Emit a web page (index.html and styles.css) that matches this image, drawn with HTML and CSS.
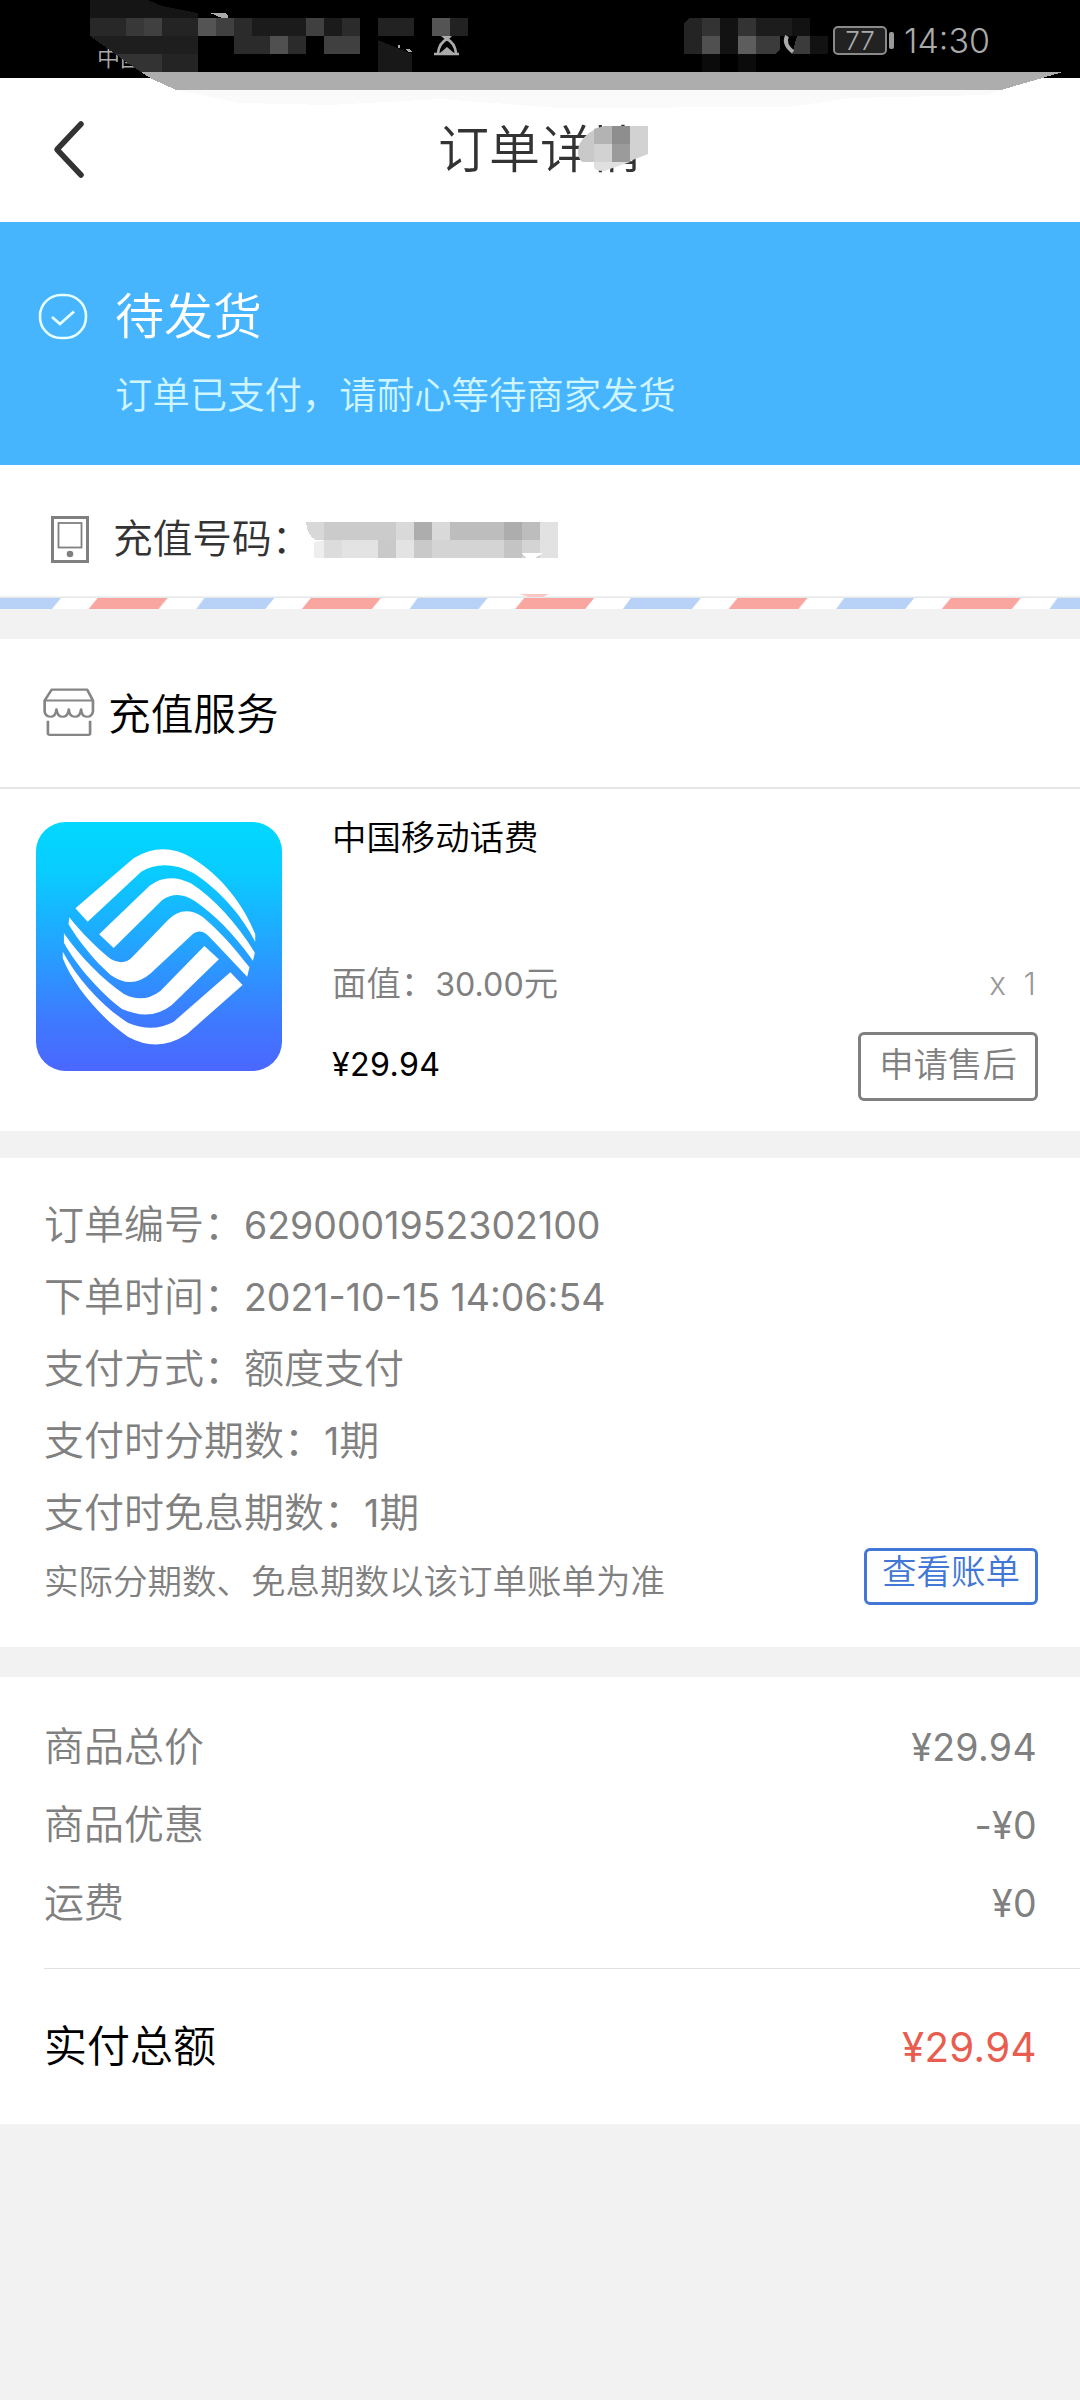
FILE: index.html
```html
<!DOCTYPE html>
<html lang="zh-CN">
<head>
<meta charset="utf-8">
<title>订单详情</title>
<link rel="stylesheet" href="styles.css">
</head>
<body>
<div class="page">
  <div class="status-bar">
    <span class="carrier">中国</span>
    <div class="status-right">
      <span class="battery">77</span><span class="battery-cap"></span><span class="clock">14:30</span>
    </div>
    <svg class="status-mask" width="1080" height="112" viewBox="0 0 1080 112" shape-rendering="crispEdges">
      <path fill="#151515" d="M90 0H148L162 6L198 13V72H141L90 36Z"/>
      <path fill="#282828" d="M90 18h36v18H90z"/>
      <path fill="#383838" d="M126 18h18v18h-18z"/>
      <path fill="#404040" d="M144 18h18v18h-18z"/>
      <path fill="#242424" d="M162 18h36v18h-36z"/>
      <path fill="#1e1e1e" d="M90 36h108v18h-83z"/>
      <path fill="#333" d="M115 54h47v18h-21z"/>
      <path fill="#242424" d="M162 54h36v18h-36z"/>
      <path fill="#545454" d="M198 18h18v18h-18zM432 18h18v18h-18z"/>
      <path fill="#404040" d="M216 18h18v18h-18zM306 18h18v18h-18zM324 36h36v18h-36z"/>
      <path fill="#2b2b2b" d="M234 18h18v18h-18zM342 18h18v18h-18zM234 36h36v18h-36zM288 36h18v18h-18z"/>
      <path fill="#1b1b1b" d="M252 18h54v18h-54zM324 18h18v18h-18z"/>
      <path fill="#505050" d="M270 36h18v18h-18z"/>
      <path fill="#222" d="M378 18h36v18h-36zM450 18h18v18h-18z"/>
      <path fill="#181818" d="M378 40l34 14v18h-34z"/>
      <path fill="#aaa" d="M210 13h15l3 3v2h-6zM398 45h2v3h-2zM405 49h4l3 3h-3z"/>
      <path fill="#242424" d="M684 24l5-6h13v36h-18z"/>
      <path fill="#333" d="M702 18h18v18h-18zM738 18h18v18h-18z"/>
      <path fill="#505050" d="M702 36h18v18h-18z"/>
      <path fill="#1c1c1c" d="M756 18h36v18h-36z"/>
      <path fill="#121212" d="M720 18h18v36h-18zM792 18h18v18h-18zM810 36h18v18h-18z"/>
      <path fill="#5d5d5d" d="M738 36h18v18h-18z"/>
      <path fill="#3b3b3b" d="M756 36h24v13l-4 5h-20zM797 36h13v18h-18z"/>
      <path fill="#0b0b0b" d="M702 54h18v18h-18zM738 54h18v18h-18z"/>
      <path fill="#fafafa" d="M176 90H1002L988 95L850 98L790 107L560 108L440 99L330 105L240 103Z"/>
      <path fill="#adadad" d="M141 72H1063L1001 90H176L152 79Z"/>
      <g shape-rendering="auto" fill="none" stroke="#aaa">
        <path stroke-width="4" d="M787 36c-3 6 1 12 6 16"/>
        <path stroke-width="2.6" d="M434 54h25M438 53c1-8 5-12 9-14 4 2 8 6 9 14"/>
        <path fill="#aaa" stroke="none" d="M441 36h11l-5 5zM440 53l7-6 7 6z"/>
      </g>
    </svg>
  </div>

  <header class="nav">
    <svg class="back" width="34" height="62" viewBox="0 0 34 62"><path d="M28 5L4 30.500L28 56" fill="none" stroke="#333" stroke-width="5.500" stroke-linecap="round" stroke-linejoin="round"/></svg>
    <h1 class="nav-title">订单详情
      <svg class="title-mask" width="72" height="48" viewBox="0 0 72 48">
        <path fill="#c9c9c9" d="M16 4C5 10 0 18 0 26C0 31 3 36 5 36H18V2Z"/>
        <path fill="#b3b3b3" d="M16 3L26 0H34V18H16Z"/>
        <path fill="#8e8e8e" d="M34 0H52V18H34Z"/>
        <path fill="#d2d2d2" d="M52 0H70V28L52 35ZM16 18H34V36H16Z"/>
        <path fill="#9b9b9b" d="M34 18H52V36H34Z"/>
        <path fill="#e0e0e0" d="M16 36H52L26 45Q16 45 16 41Z"/>
      </svg>
    </h1>
  </header>

  <section class="state">
    <svg class="state-icon" width="50" height="47" viewBox="0 0 50 47" fill="none" stroke="#e8ffff"><rect x="2" y="2" width="46" height="43" rx="21" stroke-width="2.600"/><path d="M14 24l8 7L36 18.500" stroke-width="2.800"/></svg>
    <div>
      <p class="state-title">待发货</p>
      <p class="state-desc">订单已支付，请耐心等待商家发货</p>
    </div>
  </section>

  <section class="account">
    <svg width="38" height="47" viewBox="0 0 38 47" fill="none" stroke="#808080"><rect x="1.500" y="1.500" width="35" height="44" stroke-width="3"/><rect x="7.500" y="7" width="23" height="24.500" stroke-width="1.800"/><circle cx="19" cy="38" r="3.300" fill="#808080" stroke="none"/></svg>
    <span class="account-label">充值号码：</span>
    <svg class="number-mask" width="252" height="38" viewBox="0 0 252 38" shape-rendering="crispEdges">
      <path fill="#d8d8d8" d="M0 0h18v18H10Q1 14 0 0z"/>
      <path fill="#cbcbcb" d="M18 0h72v18H18z"/>
      <path fill="#d9d9d9" d="M90 0h18v18H90zM126 0h18v18h-18z"/>
      <path fill="#adadad" d="M108 0h18v18h-18zM198 0h18v18h-18z"/>
      <path fill="#bdbdbd" d="M144 0h54v18h-54zM216 0h18v18h-18z"/>
      <path fill="#e2e2e2" d="M234 0h18v36h-18z"/>
      <path fill="#eee" d="M8 20l10-2v18H8z"/>
      <path fill="#dcdcdc" d="M18 18h18v18H18z"/>
      <path fill="#e3e3e3" d="M36 18h36v18H36zM90 18h18v18H90z"/>
      <path fill="#c9c9c9" d="M72 18h18v18H72zM108 18h18v18h-18z"/>
      <path fill="#d4d4d4" d="M126 18h72v18h-72zM216 18h18v18h-18z"/>
      <path fill="#c4c4c4" d="M198 18h18v18h-18z"/>
      <path fill="#fff" d="M216 31h21l-8 5v1h-8z"/>
    </svg>
  </section>
  <svg class="airmail" width="1080" height="15" viewBox="0 0 1080 15">
    <defs><pattern id="stripes" x="-17" y="4" width="213.300" height="11" patternUnits="userSpaceOnUse">
      <path fill="#b8d2f7" d="M8 0H78L69 11H0Z"/><path fill="#f9a5a0" d="M114.600 0H184.600L175.600 11H105.600Z"/>
    </pattern></defs>
    <path fill="#e4e8e8" d="M0 2.500h1080v1.500H0z"/>
    <rect y="4" width="1080" height="11" fill="url(#stripes)"/>
    <path fill="#fbc8c4" d="M520 0h29l-6 3h-15z"/>
  </svg>

  <section class="shop">
    <svg width="52" height="49" viewBox="106 623 127 145" preserveAspectRatio="none" fill="none" stroke="#858585" stroke-width="6.500" stroke-linejoin="round"><path d="M127 628H214L228 660V692Q226 708 213 708Q200 708 199 686Q197 708 184 708Q170 708 169 686Q167 708 154 708Q141 708 139 686Q137 708 124 708Q111 706 110 692V660ZM110 660H228M118 720V757Q118 762 123 762H217Q221 762 221 757V720"/></svg>
    <h2 class="shop-title">充值服务</h2>
  </section>

  <section class="product">
    <svg class="logo" width="246" height="249" viewBox="95 96 643 747" preserveAspectRatio="none">
      <defs><linearGradient id="sky" x1="0" y1="0" x2="0" y2="1"><stop offset="0" stop-color="#02d8ff"/><stop offset=".2" stop-color="#08ccff"/><stop offset=".55" stop-color="#289cff"/><stop offset=".8" stop-color="#3e79ff"/><stop offset="1" stop-color="#4b67fe"/></linearGradient></defs>
      <rect x="95" y="96" width="643" height="747" rx="78" ry="88" fill="url(#sky)"/>
      <g fill="#fff">
        <path d="M198 355L350 205Q425 152 502 203C580 255 640 350 668 432V455C630 370 570 295 505 248Q430 205 370 245L230 395Z"/>
        <path d="M260 433L392 287Q440 246 500 280C560 325 620 400 667 488L662 512C610 428 560 373 510 333Q465 298 425 330L298 474Z"/>
        <path d="M182 382C215 430 255 475 290 507Q325 530 350 497L440 390Q480 343 530 380C570 418 610 468 653 532L647 560C605 510 570 465 540 432Q520 415 500 437L395 550Q345 600 290 555C245 510 205 450 180 403Z"/>
        <path d="M168 430C210 500 270 570 325 612Q375 642 420 603L535 468L573 508L450 645Q395 695 320 657C260 605 200 525 168 458Z"/>
        <path d="M165 485C205 570 270 650 335 698Q400 730 455 695L603 547L635 585L490 732Q415 790 335 740C260 680 190 580 165 505Z"/>
      </g>
    </svg>
    <div class="product-info">
      <p class="product-name">中国移动话费</p>
      <div class="product-row face"><span>面值：<span class="num">30.00</span>元</span><span class="qty">x&nbsp; 1</span></div>
      <div class="product-row"><span class="product-price"><span class="num price">¥29.94</span></span><button class="btn btn-service">申请售后</button></div>
    </div>
  </section>

  <section class="order">
    <p>订单编号：<span class="num">6290001952302100</span></p>
    <p>下单时间：<span class="num">2021-10-15 14:06:54</span></p>
    <p>支付方式：额度支付</p>
    <p>支付时分期数：<span class="num">1</span>期</p>
    <p>支付时免息期数：<span class="num">1</span>期</p>
    <div class="order-note"><span>实际分期数、免息期数以该订单账单为准</span><button class="btn btn-bill">查看账单</button></div>
  </section>

  <section class="totals">
    <div class="total-row"><span>商品总价</span><span><span class="num price">¥29.94</span></span></div>
    <div class="total-row"><span>商品优惠</span><span><span class="num price">-¥0</span></span></div>
    <div class="total-row"><span>运费</span><span><span class="num price">¥0</span></span></div>
    <div class="grand"><span>实付总额</span><span class="grand-amount"><span class="num price">¥29.94</span></span></div>
  </section>
</div>
</body>
</html>
```
FILE: styles.css
```css
* { box-sizing: border-box; margin: 0; padding: 0; }
body {
  background: #f2f2f2;
  color: #808080;
  font-family: Roboto, "Noto Sans CJK SC", sans-serif;
  font-weight: 350;
}
svg { display: block; flex: none; }
button { font: inherit; background: none; }
.page { width: 1080px; height: 2400px; overflow: hidden; background: #f2f2f2; }
.num { font-family: Inter, sans-serif; font-size: .937em; font-weight: 400; }
.price { letter-spacing: .35px; }

.status-bar {
  position: relative;
  display: flex;
  justify-content: space-between;
  height: 78px;
  padding: 0 90px 0 97px;
  background: #000;
  color: #aaa;
}
.carrier { padding-top: 46px; font-size: 23px; line-height: 26px; }
.status-right { display: flex; align-items: center; z-index: 1; padding-top: 3px; font-family: Inter, sans-serif; }
.battery {
  width: 54px;
  height: 29px;
  border: 2px solid #8a8a8a;
  border-radius: 5px;
  background: #222;
  font-size: 26px;
  line-height: 26px;
  text-align: center;
}
.battery-cap { width: 5px; height: 17px; margin: 0 10px 0 2px; border-radius: 2px; background: #999; }
.clock { font-size: 34px; line-height: 40px; }
.status-mask { position: absolute; left: 0; top: 0; }

.nav {
  display: grid;
  grid-template-columns: 120px 1fr 120px;
  align-items: center;
  height: 144px;
  background: #fff;
}
.back { margin-left: 53px; }
.nav-title {
  position: relative;
  justify-self: center;
  padding-top: 2px;
  color: #333;
  font-size: 51px;
  font-weight: 350;
  line-height: 60px;
}
.title-mask { position: absolute; left: 140px; top: 7px; }

.state {
  display: flex;
  gap: 27px;
  height: 243px;
  padding: 66px 38px 0;
  background: #47b5fd;
}
.state-icon { margin-top: 5px; }
.state-title { color: #fff; font-size: 49px; line-height: 60px; }
.state-desc { margin-top: 23px; color: #cff5ff; font-size: 37.4px; line-height: 50px; }

.account {
  display: flex;
  align-items: center;
  height: 129px;
  padding: 20px 51px 0;
  background: #fff;
  color: #333;
}
.account-label { width: 193px; margin-left: 24px; font-size: 39.7px; line-height: 50px; white-space: nowrap; }
.number-mask { margin-top: 2px; }
.airmail { background: #fff; }

.shop {
  display: flex;
  align-items: center;
  gap: 13px;
  height: 150px;
  margin-top: 30px;
  padding-left: 43px;
  border-bottom: 2px solid #e6e6e6;
  background: #fff;
}
.shop svg { margin-top: -2px; }
.shop-title { padding-top: 3px; color: #000; font-size: 42.7px; font-weight: 350; line-height: 56px; }

.product {
  display: flex;
  gap: 50px;
  height: 342px;
  padding: 33px 42px 0 36px;
  background: #fff;
  font-size: 34.4px;
  line-height: 44px;
}
.product-info { flex: 1; }
.product-name { margin-top: -6px; color: #000; }
.product-row { display: flex; justify-content: space-between; }
.face { margin-top: 102px; }
.qty { padding-right: 2px; color: #999; font-family: Inter, sans-serif; font-size: 31.5px; }
.product-row + .product-row { margin-top: 25px; }
.product-price { margin-top: 10px; color: #000; }
.btn { border: 3px solid #808080; border-radius: 6px; color: inherit; }
.btn-service { width: 180px; height: 69px; padding-bottom: 3px; line-height: 44px; }

.order {
  height: 489px;
  margin-top: 27px;
  padding: 32px 42px 0 44px;
  background: #fff;
  font-size: 40px;
  line-height: 72px;
}
.order-note { display: flex; justify-content: space-between; font-size: 34.5px; line-height: 64px; }
.btn-bill {
  width: 174px;
  height: 57px;
  margin-top: -2px;
  padding-bottom: 8px;
  border-color: #4277d6;
  color: #4277d6;
  line-height: 43px;
}

.totals { height: 447px; margin-top: 30px; padding: 32px 0 0 44px; background: #fff; font-size: 40px; }
.total-row { display: flex; justify-content: space-between; padding-right: 43px; line-height: 78px; }
.grand {
  display: flex;
  justify-content: space-between;
  margin-top: 25px;
  padding-right: 43px;
  border-top: 1px solid #e0e0e0;
  color: #000;
  font-size: 43px;
  line-height: 156px;
}
.grand-amount { color: #e85d50; }
```
